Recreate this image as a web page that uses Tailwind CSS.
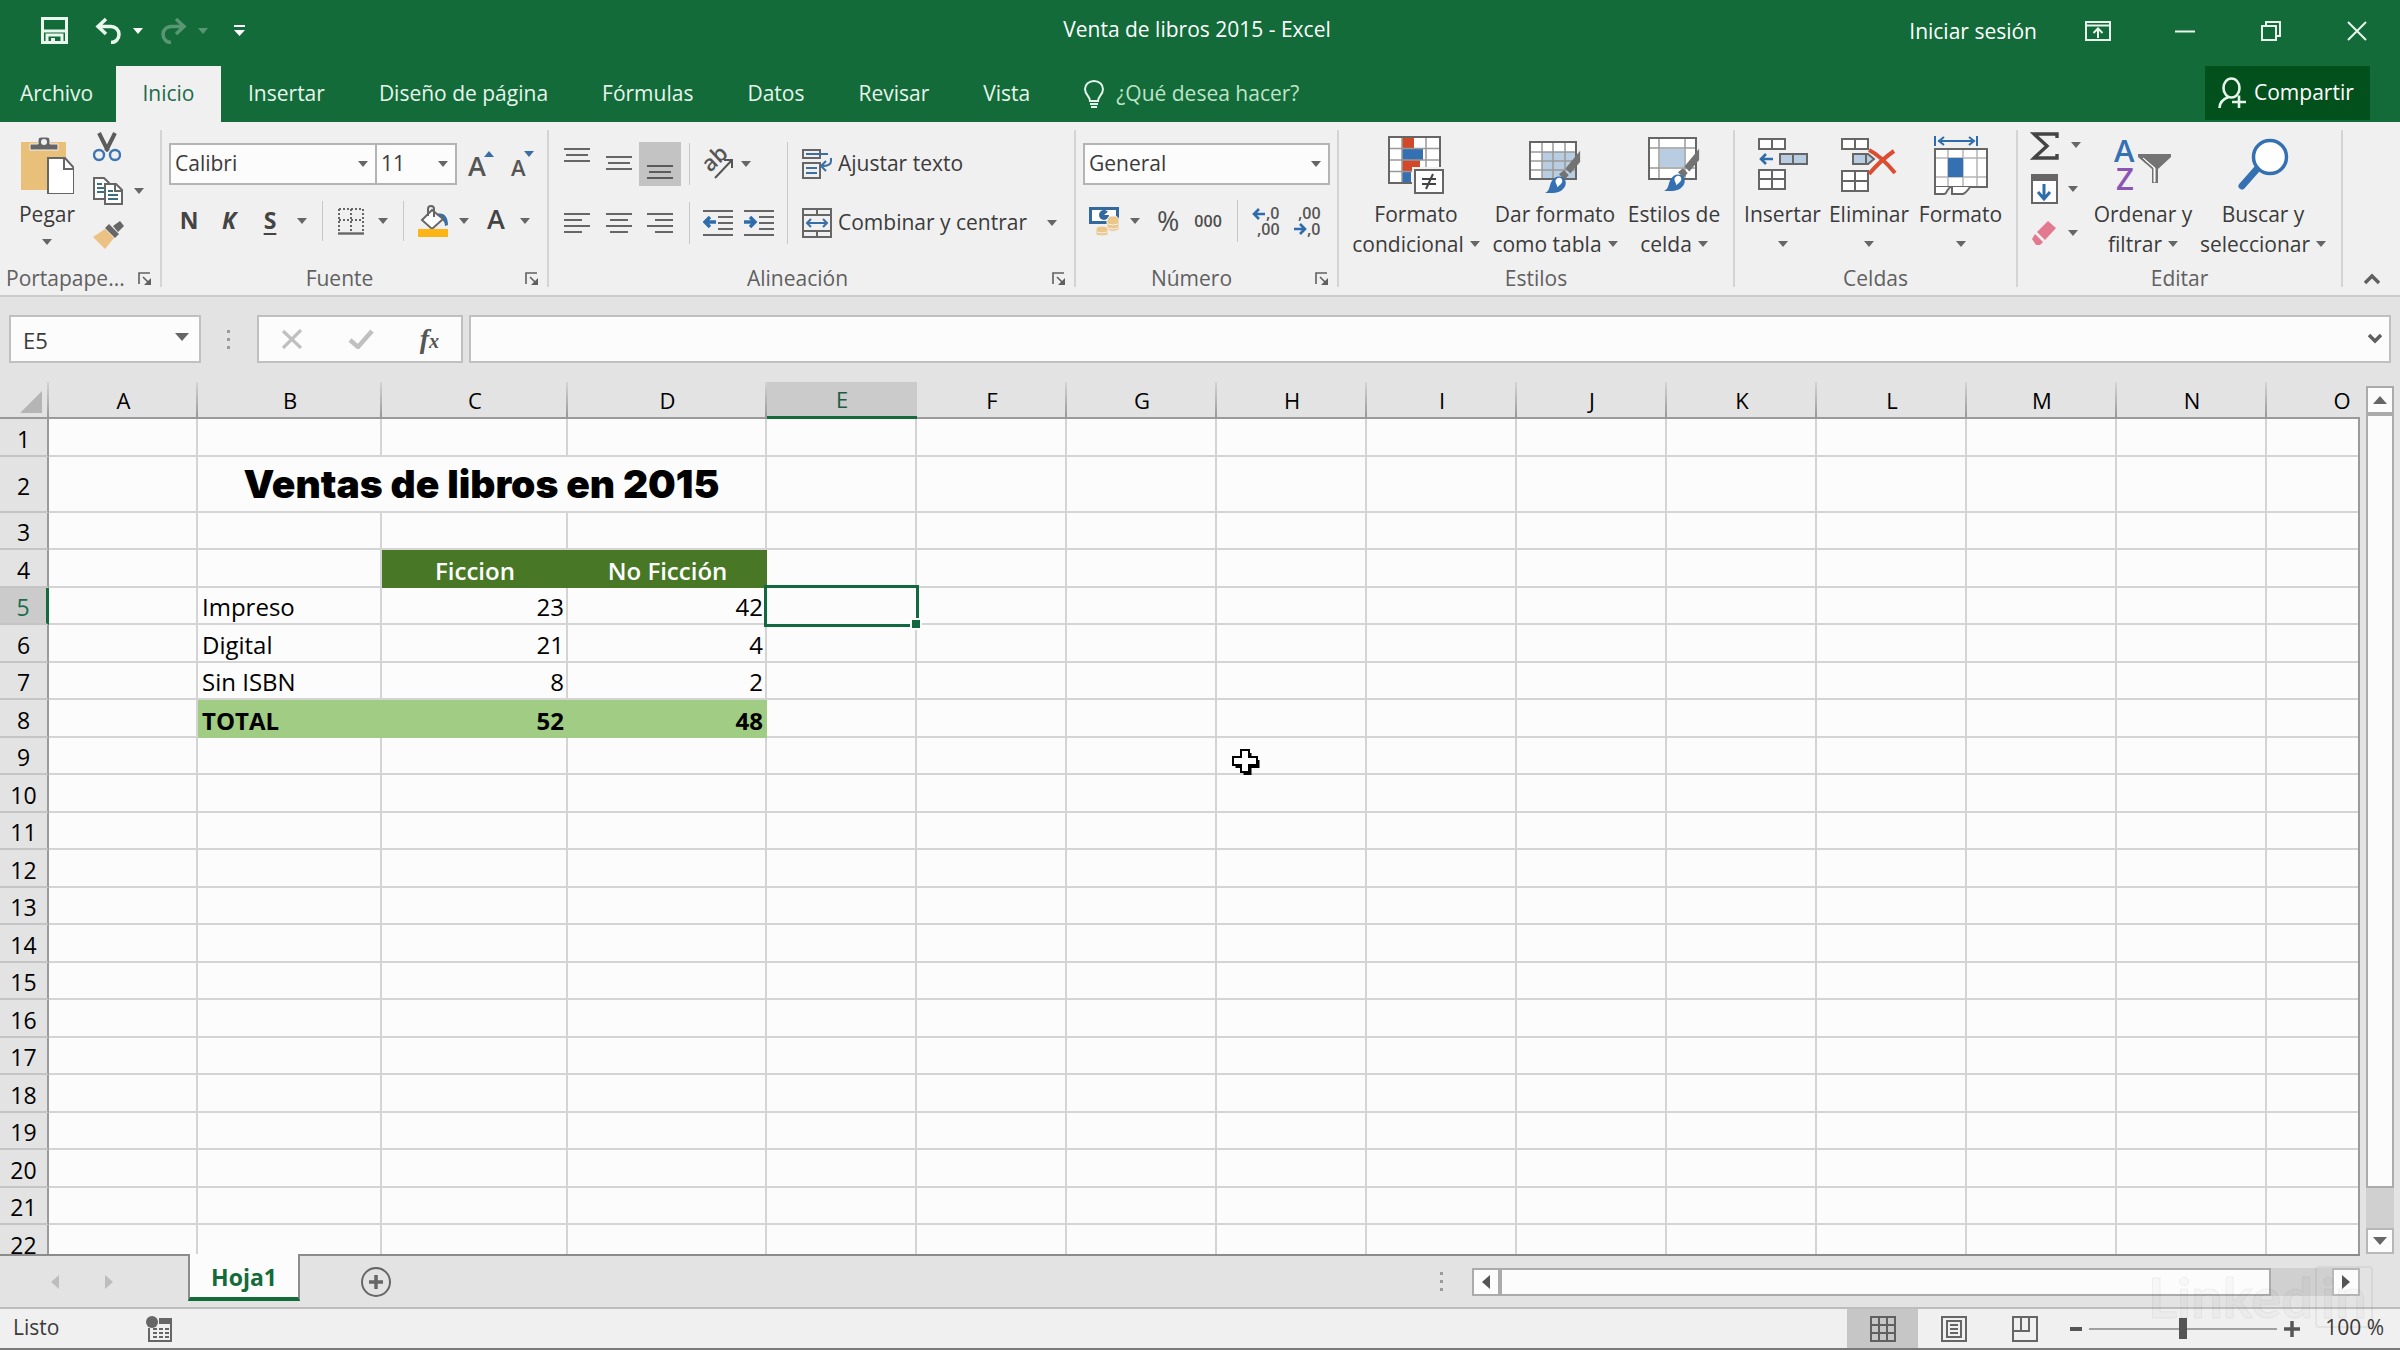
<!DOCTYPE html>
<html lang="es">
<head>
  <meta charset="UTF-8" />
  <meta name="viewport" content="width=device-width, initial-scale=1" />
  <title>Venta de libros 2015 - Excel</title>
  <script src="https://cdn.jsdelivr.net/npm/@tailwindcss/browser@4"></script>
</head>
<body class="h-screen flex flex-col overflow-hidden bg-[#e3e3e3] font-['Open_Sans',sans-serif] text-[21px] text-[#3b3b3b]">

  <!-- Shared symbols -->
  <svg class="hidden">
    <symbol id="caret" viewBox="0 0 10 6"><path d="M0 0h10L5 6z" fill="currentColor"/></symbol>
    <symbol id="launcher" viewBox="0 0 14 14"><path d="M1 12V1h11M5 5l6 6" fill="none" stroke="currentColor" stroke-width="1.6"/><path d="M13 6v7H6z" fill="currentColor"/></symbol>
    <symbol id="brush" viewBox="0 0 44 54">
      <path d="M43 2 43 16 31 30 25 24z" fill="#737373"/>
      <path d="M23 26l6 6-5 6-7-7z" fill="#737373"/>
      <path d="M0 54c6-2 5-9 8-14 3-6 9-8 14-5 5 4 4 10 0 14-5 6-14 5-22 5z" fill="#3470b2"/>
      <path d="M13 38c3-4 7-3 8 0 1 4-3 6-6 9 0-4-3-5-2-9z" fill="#fff"/>
    </symbol>
  </svg>

  <!-- Title bar -->
  <header class="bg-[#126b39] text-white">
    <div class="relative h-[66px] flex items-center pb-[5px]">
      <div class="flex items-center pl-[41px]">
        <button aria-label="Guardar"><svg class="w-[27px] h-[27px]" viewBox="0 0 27 27" fill="none" stroke="#e9f7ee"><path d="M1.5 1.5h24v24h-24z" stroke-width="3"/><path d="M2 14h23" stroke-width="3"/><path d="M6 26v-8h15v8" stroke-width="3"/><path d="M12 21v5" stroke-width="4"/></svg></button>
        <button aria-label="Deshacer" class="ml-[27px] flex items-center gap-[11px]">
          <svg class="w-[27px] h-[27px]" viewBox="0 0 27 27" fill="none" stroke="#e9f7ee" stroke-width="3.5"><path d="M11 2 3 9.500 11 17M3 9.500h13a8 8 0 0 1 0 16"/></svg>
          <svg class="w-[10px] h-[6px]"><use href="#caret"/></svg>
        </button>
        <button aria-label="Rehacer" class="ml-[17px] flex items-center gap-[11px] text-white/30">
          <svg class="w-[27px] h-[27px]" viewBox="0 0 27 27" fill="none" stroke="currentColor" stroke-width="3.500"><path d="m16 2 8 7.500L16 17M24 9.500H11a8 8 0 0 0 0 16"/></svg>
          <svg class="w-[10px] h-[6px]"><use href="#caret"/></svg>
        </button>
        <button aria-label="Personalizar barra de acceso rápido" class="ml-[26px]"><svg class="w-[11px] h-[11px]" viewBox="0 0 11 11" fill="#fff"><path d="M0 0h11v2H0zM0 5h11l-5.500 6z"/></svg></button>
      </div>
      <h1 class="absolute inset-x-0 top-[15px] pointer-events-none text-center leading-[28px] pr-1.5">Venta de libros 2015 - Excel</h1>
      <div class="ml-auto flex items-center pr-[33px]">
        <a href="#" class="leading-[28px]">Iniciar sesión</a>
        <button aria-label="Opciones de presentación" class="ml-[48px]"><svg class="w-[26px] h-[20px]" viewBox="0 0 26 20" fill="none" stroke="#e9f7ee" stroke-width="2"><path d="M1 1h24v18H1zM1 4.500h24M13 17V8M8.500 12 13 7.500l4.500 4.500"/></svg></button>
        <button aria-label="Minimizar" class="ml-[64px]"><svg class="w-[20px] h-[20px]" viewBox="0 0 20 20"><path d="M0 10.500h20" stroke="#e9f7ee" stroke-width="2"/></svg></button>
        <button aria-label="Restaurar" class="ml-[66px]"><svg class="w-[20px] h-[20px]" viewBox="0 0 20 20" fill="none" stroke="#e9f7ee" stroke-width="2"><path d="M1 5h14v14H1zM5 5V1h14v14h-4"/></svg></button>
        <button aria-label="Cerrar" class="ml-[66px]"><svg class="w-[20px] h-[20px]" viewBox="0 0 20 20"><path d="M1 1l18 18M19 1 1 19" stroke="#e9f7ee" stroke-width="2"/></svg></button>
      </div>
    </div>

    <!-- Ribbon tabs -->
    <nav class="h-14 flex items-stretch text-[#e6f5eb]">
      <a href="#" class="w-[116px] flex items-center pl-5">Archivo</a>
      <a href="#" class="w-[105px] flex items-center justify-center bg-[#f0f0f0] text-[#1d6b4a]">Inicio</a>
      <a href="#" class="flex items-center px-[27px]">Insertar</a>
      <a href="#" class="flex items-center px-[27px]">Diseño de página</a>
      <a href="#" class="flex items-center px-[27px]">Fórmulas</a>
      <a href="#" class="flex items-center px-[27px]">Datos</a>
      <a href="#" class="flex items-center px-[27px]">Revisar</a>
      <a href="#" class="flex items-center px-[27px]">Vista</a>
      <a href="#" class="flex items-center gap-3 pl-[27px] text-[#bfe3c8]">
        <svg class="w-[20px] h-[28px]" viewBox="0 0 20 28" fill="none" stroke="#e6f5eb" stroke-width="2"><path d="M6 21c0-5-5-6-5-12a9 8 0 0 1 18 0c0 6-5 7-5 12zM6 24h8M7 27h6"/></svg>
        ¿Qué desea hacer?
      </a>
      <button class="ml-auto mr-[30px] w-[165px] mb-0.5 flex items-center pl-[13px] gap-2 bg-[#02501c] text-white">
        <svg class="w-[28px] h-[32px]" viewBox="0 0 28 32" fill="none" stroke="#e6f5eb" stroke-width="2.600"><ellipse cx="13.500" cy="11" rx="8" ry="9.500"/><path d="M1.500 31c0-6 4-9 9-11M14 25h14M21 18.500V31"/></svg>
        Compartir
      </button>
    </nav>
  </header>

  <!-- Ribbon -->
  <div class="h-[175px] flex border-b-2 border-[#cccccc] bg-[#f0f0f0] text-[#3b3b3b]">

    <section class="w-[160px] flex flex-col">
      <div class="flex-1 flex pt-2">
        <button class="w-[86px] pl-2 flex flex-col items-center">
          <span class="h-[69px] flex items-center"><svg class="w-[54px] h-[58px]" viewBox="0 0 54 58"><path d="M1 6h45v48H1z" fill="#e9c07a"/><path d="M10 14V8h8V4q0-3 3-3h6q3 0 3 3v4h8v6z" fill="#666" stroke="#f0f0f0"/><circle cx="24" cy="6" r="3" fill="#f0f0f0"/><path d="M28 22h17l9 10v26H28z" fill="#fff" stroke="#666" stroke-width="2"/><path d="M44 22v11h10" fill="none" stroke="#666" stroke-width="2"/></svg></span>
          <span class="leading-[30px]">Pegar</span>
          <svg class="w-[10px] h-[6px] mt-2.5 text-[#666]"><use href="#caret"/></svg>
        </button>
        <div class="flex flex-col gap-3.5 pl-[7px] pt-[2px]">
          <button aria-label="Cortar" class="h-[30px]"><svg class="w-[28px] h-[30px]" viewBox="0 0 28 30" fill="none"><path d="M6 1l9 18M22 1l-9 18" stroke="#5c5c5c" stroke-width="4"/><circle cx="6" cy="23" r="5" stroke="#3e75b5" stroke-width="2.400"/><circle cx="22" cy="23" r="5" stroke="#3e75b5" stroke-width="2.400"/></svg></button>
          <button aria-label="Copiar" class="h-[30px] flex items-center gap-[11px]"><svg class="w-[30px] h-[28px]" viewBox="0 0 30 28" fill="#fff" stroke="#666" stroke-width="2"><path d="M1 1h10l5 5v16H1z"/><path d="M4 7h5M4 11h7M4 15h7" stroke="#3c6f80"/><path d="M12 7h11l6 6v14H12z"/><path d="M22 7v7h7" fill="none"/><path d="M15 14h5M15 18h10M15 22h10" stroke="#3c6f80"/></svg><svg class="w-[10px] h-[6px] text-[#666]"><use href="#caret"/></svg></button>
          <button aria-label="Copiar formato" class="h-[30px]"><svg class="w-[32px] h-[28px]" viewBox="0 0 32 28"><path d="M0 16 12 8l9 9-9 11z" fill="#ebc184"/><path d="M12 7l4-4 10 10-4 4zM20 5l7-5 4 5-6 6z" fill="#666"/></svg></button>
        </div>
      </div>
      <footer class="h-8 flex items-center justify-between pl-1.5 pr-2 text-[#606060]"><span>Portapape...</span><button aria-label="Opciones de portapapeles" class="flex"><svg class="w-[14px] h-[14px]"><use href="#launcher"/></svg></button></footer>
    </section>
    <div class="w-[2px] my-2 bg-[#d4d4d4]"></div>

    <section class="w-[385px] flex flex-col">
      <div class="flex-1 flex flex-col pt-[21px] pl-[7px]">
        <div class="h-[42px] flex items-center">
          <label class="relative w-[208px] h-full"><select aria-label="Fuente" class="w-full h-full appearance-none border-2 border-[#b4b4b4] bg-[#fcfcfc] pl-1"><option>Calibri</option></select><svg class="absolute right-[9px] top-[18px] w-[10px] h-[6px] text-[#666] pointer-events-none"><use href="#caret"/></svg></label>
          <label class="relative -ml-0.5 w-[82px] h-full"><select aria-label="Tamaño de fuente" class="w-full h-full appearance-none border-2 border-[#b4b4b4] bg-[#fcfcfc] pl-1"><option>11</option></select><svg class="absolute right-[9px] top-[18px] w-[10px] h-[6px] text-[#666] pointer-events-none"><use href="#caret"/></svg></label>
          <button aria-label="Aumentar tamaño de fuente" class="ml-[12px]"><svg class="w-[26px] h-[28px] overflow-visible" viewBox="0 0 26 28"><text x="-1" y="26" font-size="27" font-weight="600" fill="#555">A</text><path d="M15 7h10l-5-6z" fill="#3a6ea5"/></svg></button>
          <button aria-label="Disminuir tamaño de fuente" class="ml-[16px]"><svg class="w-[26px] h-[28px] overflow-visible" viewBox="0 0 26 28"><text x="0" y="26" font-size="22" font-weight="600" fill="#555">A</text><path d="M13 1h10l-5 6z" fill="#3a6ea5"/></svg></button>
        </div>
        <div class="h-[42px] mt-[15px] flex items-center text-[#444] font-bold text-[23px] leading-[30px]">
          <button class="w-10 pb-0.5">N</button>
          <button class="w-10 pb-0.5 italic">K</button>
          <button class="w-[42px] pb-0.5 underline underline-offset-4">S</button>
          <svg class="ml-[6px] w-[10px] h-[6px] text-[#666]"><use href="#caret"/></svg>
          <div class="ml-[15px] w-px h-10 bg-[#c8c8c8]"></div>
          <button aria-label="Bordes" class="ml-[15px]"><svg class="w-[26px] h-[28px]" viewBox="0 0 26 28" fill="none" stroke="#666"><path d="M1 2h24M1 13h24M1 2v22M13 2v22M25 2v22" stroke-width="2" stroke-dasharray="2 2"/><path d="M0 26.500h26" stroke-width="2.400"/></svg></button>
          <svg class="ml-[14px] w-[10px] h-[6px] text-[#666]"><use href="#caret"/></svg>
          <div class="ml-[15px] w-px h-10 bg-[#c8c8c8]"></div>
          <button aria-label="Color de relleno" class="ml-[14px]"><svg class="w-[30px] h-[32px]" viewBox="0 0 30 32"><path d="M19 9c7-2 11 3 11 11l-3 1c0-5-3-7-8-7z" fill="#3a6ea5"/><path d="M14 5 25 14 14 24 4 15z" fill="#fff" stroke="#666" stroke-width="2"/><path d="M10 11V4q0-3 3-3t3 3v8" fill="none" stroke="#666" stroke-width="2"/><path d="M0 24h30v8H0z" fill="#fdb515"/></svg></button>
          <svg class="ml-[11px] w-[10px] h-[6px] text-[#666]"><use href="#caret"/></svg>
          <button aria-label="Color de fuente" class="ml-[18px] pb-1 text-[27px] font-semibold">A</button>
          <svg class="ml-[15px] w-[10px] h-[6px] text-[#666]"><use href="#caret"/></svg>
        </div>
      </div>
      <footer class="h-8 flex items-center pr-2 text-[#606060]"><span class="flex-1 text-center pr-2">Fuente</span><button aria-label="Opciones de fuente" class="flex"><svg class="w-[14px] h-[14px]"><use href="#launcher"/></svg></button></footer>
    </section>
    <div class="w-[2px] my-2 bg-[#d4d4d4]"></div>

    <section class="w-[525px] flex flex-col">
      <div class="flex-1 flex pt-[20px] pl-[7px]">
        <div>
          <div class="h-[44px] flex items-center">
            <button aria-label="Alinear en la parte superior" class="w-[42px] h-11 flex justify-center pt-1"><svg class="w-[26px] h-[18px]" viewBox="0 0 26 18" stroke="#666" stroke-width="2"><path d="M0 3h26M2 9h22M0 15h26"/></svg></button>
            <button aria-label="Alinear en el medio" class="w-[41px] h-11 flex justify-center items-center"><svg class="w-[26px] h-[18px]" viewBox="0 0 26 18" stroke="#666" stroke-width="2"><path d="M0 2h26M2 8h22M0 14h26"/></svg></button>
            <button aria-label="Alinear en la parte inferior" class="w-[42px] h-11 flex justify-center items-end pb-1.5 bg-[#c3c3c3]"><svg class="w-[26px] h-[18px]" viewBox="0 0 26 18" stroke="#5c5c5c" stroke-width="2"><path d="M0 4h26M2 10h22M0 16h26"/></svg></button>
            <div class="ml-2 w-px h-[42px] bg-[#c8c8c8]"></div>
            <button aria-label="Orientación" class="ml-[12px] flex items-center gap-[7px]"><svg class="w-[32px] h-[30px] overflow-visible" viewBox="0 0 32 30"><text transform="translate(8 24) rotate(-43)" font-size="22" font-weight="600" fill="#555">ab</text><path d="M13 29 30 11M22 11h8v8" fill="none" stroke="#555" stroke-width="2"/></svg><svg class="w-[10px] h-[6px] text-[#666]"><use href="#caret"/></svg></button>
          </div>
          <div class="h-[42px] mt-4 flex items-center">
            <button aria-label="Alinear a la izquierda" class="w-[42px] flex justify-center"><svg class="w-[26px] h-[22px]" viewBox="0 0 26 22" stroke="#666" stroke-width="2"><path d="M0 2h26M0 8h18M0 14h26M0 20h18"/></svg></button>
            <button aria-label="Centrar" class="w-[41px] flex justify-center"><svg class="w-[26px] h-[22px]" viewBox="0 0 26 22" stroke="#666" stroke-width="2"><path d="M0 2h26M4 8h18M0 14h26M4 20h18"/></svg></button>
            <button aria-label="Alinear a la derecha" class="w-[42px] flex justify-center"><svg class="w-[26px] h-[22px]" viewBox="0 0 26 22" stroke="#666" stroke-width="2"><path d="M0 2h26M8 8h18M0 14h26M8 20h18"/></svg></button>
            <div class="ml-2 w-px h-[42px] bg-[#c8c8c8]"></div>
            <button aria-label="Disminuir sangría" class="ml-[13px]"><svg class="w-[30px] h-[26px]" viewBox="0 0 30 26" fill="none" stroke="#666" stroke-width="2"><path d="M0 1h30M15 7h15M15 13h15M15 19h15M0 25h30"/><path d="M13 12H3M7 7l-5 5 5 5" stroke="#2f6cab" stroke-width="3.400"/></svg></button>
            <button aria-label="Aumentar sangría" class="ml-[11px]"><svg class="w-[30px] h-[26px]" viewBox="0 0 30 26" fill="none" stroke="#666" stroke-width="2"><path d="M0 1h30M15 7h15M15 13h15M15 19h15M0 25h30"/><path d="M0 12h10M6 7l5 5-5 5" stroke="#2f6cab" stroke-width="3.400"/></svg></button>
          </div>
        </div>
        <div class="ml-[13px] w-px h-[102px] bg-[#c8c8c8]"></div>
        <div class="ml-[14px]">
          <button class="h-[44px] flex items-center gap-1.5"><svg class="w-[30px] h-[30px]" viewBox="0 0 30 30" fill="none" stroke="#666" stroke-width="2"><path d="M1 1h17v8H1zM1 14h17v15H1z"/><path d="M4 5h22M4 19h11M4 24h11M29 9v3q0 5-9 5M24 12l-5 5 5 5" stroke="#3a6ea5"/></svg>Ajustar texto</button>
          <button class="h-[42px] mt-4 flex items-center gap-1.5"><svg class="w-[30px] h-[30px]" viewBox="0 0 30 30" fill="none" stroke="#666" stroke-width="2"><path d="M1 1h28v28H1zM1 7h28M1 23h28M15 1v6M15 23v6"/><path d="M5 15h20M9 11l-4 4 4 4M21 11l4 4-4 4" stroke="#3a6ea5"/></svg>Combinar y centrar<svg class="ml-[14px] w-[10px] h-[6px] text-[#666]"><use href="#caret"/></svg></button>
        </div>
      </div>
      <footer class="h-8 flex items-center pr-2 text-[#606060]"><span class="flex-1 text-center pr-1.5">Alineación</span><button aria-label="Opciones de alineación" class="flex"><svg class="w-[14px] h-[14px]"><use href="#launcher"/></svg></button></footer>
    </section>
    <div class="w-[2px] my-2 bg-[#d4d4d4]"></div>

    <section class="w-[261px] flex flex-col">
      <div class="flex-1 flex flex-col pt-[21px] px-[7px]">
        <label class="relative h-[42px]"><select aria-label="Formato de número" class="w-full h-full appearance-none border-2 border-[#b4b4b4] bg-[#fcfcfc] pl-1"><option>General</option></select><svg class="absolute right-[9px] top-[18px] w-[10px] h-[6px] text-[#666] pointer-events-none"><use href="#caret"/></svg></label>
        <div class="h-[42px] mt-[15px] flex items-center pl-1.5">
          <button aria-label="Formato de contabilidad" class="flex items-center gap-[11px]"><svg class="w-[30px] h-[30px]" viewBox="0 0 30 30"><path d="M1.500 2.500h27v14h-27z" fill="#fff" stroke="#33699f" stroke-width="3"/><circle cx="15" cy="9" r="5" fill="#33699f"/><path d="M15 9h6V4z" fill="#fff"/><path d="M18 15q0-5 6-5t6 5v9q-6 3-12 0z" fill="#ecc689" stroke="#f0f0f0"/><path d="M7 24q0-4 6-4t6 4v5q-6 2-12 0z" fill="#ecc689" stroke="#f0f0f0"/><path d="M19 18q5 2 10 0M19 22q5 2 10 0M8 26q5 2 10 0" fill="none" stroke="#f0f0f0"/></svg><svg class="w-[10px] h-[6px] text-[#666]"><use href="#caret"/></svg></button>
          <button class="ml-[17px] text-[27px] leading-[30px] text-[#4c4c4c]">%</button>
          <button class="ml-[15px] text-base font-semibold text-[#4c4c4c]">000</button>
          <div class="ml-[15px] w-px h-[42px] bg-[#c8c8c8]"></div>
          <button aria-label="Aumentar decimales" class="ml-[14px]"><svg class="w-[28px] h-[32px] overflow-visible" viewBox="0 0 28 32"><path d="M13 9H2M7 4 2 9l5 5" fill="none" stroke="#2f6cab" stroke-width="2.600"/><text x="14" y="14" font-size="16" font-weight="600" fill="#555">,0</text><text x="5" y="30" font-size="16" font-weight="600" fill="#555">,00</text></svg></button>
          <button aria-label="Disminuir decimales" class="ml-[14px]"><svg class="w-[28px] h-[32px] overflow-visible" viewBox="0 0 28 32"><text x="4" y="14" font-size="16" font-weight="600" fill="#555">,00</text><text x="13" y="30" font-size="16" font-weight="600" fill="#555">,0</text><path d="M0 24h11M6 19l5 5-5 5" fill="none" stroke="#2f6cab" stroke-width="2.600"/></svg></button>
        </div>
      </div>
      <footer class="h-8 flex items-center pr-2 text-[#606060]"><span class="flex-1 text-center pr-2">Número</span><button aria-label="Opciones de número" class="flex"><svg class="w-[14px] h-[14px]"><use href="#launcher"/></svg></button></footer>
    </section>
    <div class="w-[2px] my-2 bg-[#d4d4d4]"></div>

    <section class="w-[394px] flex flex-col">
      <div class="flex-1 flex items-start pt-2 pl-[7px]">
        <button class="w-[140px] flex flex-col items-center">
          <span class="h-[69px] flex items-center"><svg class="w-[56px] h-[58px]" viewBox="0 0 56 58"><path d="M1 1h51v46H1z" fill="#fff"/><path d="M14 1h12v12H14zM14 24h18v11H14z" fill="#d2492a"/><path d="M14 12h21v12H14zM14 35h9v12h-9z" fill="#3470b2"/><path d="M1 12.500h51M1 24h51M1 35.500h51M14 1v46M38 1v46" fill="none" stroke="#999" stroke-width="1.500"/><path d="M1 1h51v46H1z" fill="none" stroke="#666" stroke-width="2"/><path d="M24 31h32v27H24z" fill="#f0f0f0"/><path d="M27 34h28v23H27z" fill="#fff" stroke="#666" stroke-width="2"/><path d="M34 43h14M34 48h14M45 38l-7 15" stroke="#444" stroke-width="2"/></svg></span>
          <span class="leading-[30px]">Formato</span>
          <span class="leading-[30px] flex items-center gap-1.5">condicional<svg class="w-[10px] h-[6px] text-[#666]"><use href="#caret"/></svg></span>
        </button>
        <button class="w-[138px] flex flex-col items-center">
          <span class="h-[69px] flex items-center pl-1"><svg class="w-[56px] h-[56px]" viewBox="0 0 56 56"><path d="M1 5h46v37H1z" fill="#fff"/><path d="M13 15h34v27H13z" fill="#b8cde2"/><path d="M1 15h46M1 24h46M1 33h46M13 5v37M24 5v37M36 5v37" stroke="#999" stroke-width="1.500"/><path d="M1 5h46v37H1z" fill="none" stroke="#666" stroke-width="2"/><use href="#brush" x="12" y="12" width="44" height="44"/></svg></span>
          <span class="leading-[30px]">Dar formato</span>
          <span class="leading-[30px] flex items-center gap-1.5">como tabla<svg class="w-[10px] h-[6px] text-[#666]"><use href="#caret"/></svg></span>
        </button>
        <button class="w-[100px] flex flex-col items-center">
          <span class="h-[69px] flex items-center pl-1"><svg class="w-[56px] h-[56px]" viewBox="0 0 56 56"><path d="M1 1h47v41H1z" fill="#fff"/><path d="M12 12h24v18H12z" fill="#b8cde2"/><path d="M1 11h47M1 31h47M11 1v41M37 1v41" stroke="#999" stroke-width="1.500"/><path d="M1 1h47v41H1z" fill="none" stroke="#666" stroke-width="2"/><use href="#brush" x="12" y="10" width="44" height="44"/></svg></span>
          <span class="leading-[30px]">Estilos de</span>
          <span class="leading-[30px] flex items-center gap-1.5">celda<svg class="w-[10px] h-[6px] text-[#666]"><use href="#caret"/></svg></span>
        </button>
      </div>
      <footer class="h-8 flex items-center justify-center text-[#606060]">Estilos</footer>
    </section>
    <div class="w-[2px] my-2 bg-[#d4d4d4]"></div>

    <section class="w-[281px] flex flex-col">
      <div class="flex-1 flex items-start pt-2 pl-1">
        <button class="w-[87px] flex flex-col items-center">
          <span class="h-[69px] flex items-center"><svg class="w-[50px] h-[54px]" viewBox="0 0 50 54" fill="#fff" stroke="#666" stroke-width="2"><path d="M1 1h26v10H1zM14 1v10M1 32h26v19H1zM14 32v19M1 41h26"/><path d="M22 16h27v10H22zM35 16v10" fill="#b8cde2"/><path d="M15 21H3M8 16l-5 5 5 5" fill="none" stroke="#2f6cab" stroke-width="2.600"/></svg></span>
          <span class="leading-[30px]">Insertar</span>
          <svg class="w-[10px] h-[6px] mt-3 text-[#666]"><use href="#caret"/></svg>
        </button>
        <button class="w-[86px] flex flex-col items-center">
          <span class="h-[69px] flex items-center"><svg class="w-[56px] h-[54px]" viewBox="0 0 56 54" fill="#fff" stroke="#666" stroke-width="2"><path d="M1 1h26v10H1zM14 1v10M1 33h26v20H1zM14 33v20M1 43h26"/><path d="M12 16h15l6 5-6 5H12zM25 16v10" fill="#b8cde2"/><path d="M28 12q12 6 26 23M53 13Q40 22 28 36" fill="none" stroke="#dc4c31" stroke-width="4"/></svg></span>
          <span class="leading-[30px]">Eliminar</span>
          <svg class="w-[10px] h-[6px] mt-3 text-[#666]"><use href="#caret"/></svg>
        </button>
        <button class="w-[97px] flex flex-col items-center">
          <span class="h-[69px] flex items-center"><svg class="w-[54px] h-[60px]" viewBox="0 0 54 60" fill="none" stroke="#666" stroke-width="2"><path d="M1 1v10M43 1v10M4 6h36M10 2 5 6l5 4M35 2l5 4-5 4" stroke="#2f6cab"/><path d="M1 14h52v38H1z" fill="#fff"/><path d="M1 23h52M1 42h52M14 14v38M29 14v38M43 14v38" stroke="#b5b5b5" stroke-width="1.500"/><path d="M15 24h13v17H15z" fill="#3470b2" stroke="#3470b2"/><path d="M1 14h52v38H1z"/><path d="M1 52v7h9q2 0 3-3l3-4M18 52v7h11q3-1 7-7" fill="#fff"/></svg></span>
          <span class="leading-[30px]">Formato</span>
          <svg class="w-[10px] h-[6px] mt-3 text-[#666]"><use href="#caret"/></svg>
        </button>
      </div>
      <footer class="h-8 flex items-center justify-center text-[#606060]">Celdas</footer>
    </section>
    <div class="w-[2px] my-2 bg-[#d4d4d4]"></div>

    <section class="w-[323px] flex flex-col">
      <div class="flex-1 flex items-start pt-2 pl-3">
        <div class="w-[60px] flex flex-col gap-3.5">
          <button aria-label="Autosuma" class="h-[30px] flex items-center gap-[11px]"><svg class="w-[30px] h-[30px]" viewBox="0 0 30 30" fill="none" stroke="#444" stroke-width="3.400"><path d="M27 8V4H4l13 12L4 28h23v-4"/></svg><svg class="w-[10px] h-[6px] text-[#666]"><use href="#caret"/></svg></button>
          <button aria-label="Rellenar" class="h-[30px] flex items-center gap-[10px]"><svg class="w-[28px] h-[30px]" viewBox="0 0 28 30"><path d="M2 1h25v28H2z" fill="#fff" stroke="#666" stroke-width="2"/><path d="M1 0h27v7H1z" fill="#666"/><path d="M14 10v15M8 18l6 7 6-7" fill="none" stroke="#2f6cab" stroke-width="3"/></svg><svg class="w-[10px] h-[6px] text-[#666]"><use href="#caret"/></svg></button>
          <button aria-label="Borrar" class="h-[30px] flex items-center gap-[10px]"><svg class="w-[28px] h-[26px]" viewBox="0 0 28 26"><path d="M18 1 26 8 15 20 7 12z" fill="#e2798f"/><path d="M5 14l8 8-3 3H6l-4-6z" fill="#e2798f"/></svg><svg class="w-[10px] h-[6px] text-[#666]"><use href="#caret"/></svg></button>
        </div>
        <button class="w-[106px] flex flex-col items-center">
          <span class="h-[69px] flex items-center"><svg class="w-[58px] h-[54px] overflow-visible" viewBox="0 0 58 54"><text x="0" y="24" font-size="31" font-weight="600" fill="#3470b2">A</text><text x="2" y="52" font-size="31" font-weight="600" fill="#8b55b5">Z</text><path d="M24 16h33v3L44 31v14h-6V31L24 19z" fill="#737373"/><path d="M29 20l11 10v14h1V30z" fill="#fff" stroke="#fff"/></svg></span>
          <span class="leading-[30px]">Ordenar y</span>
          <span class="leading-[30px] flex items-center gap-1.5">filtrar<svg class="w-[10px] h-[6px] text-[#666]"><use href="#caret"/></svg></span>
        </button>
        <button class="w-[134px] flex flex-col items-center">
          <span class="h-[69px] flex items-center"><svg class="w-[52px] h-[54px]" viewBox="0 0 52 54"><path d="M5 48 20 31" stroke="#3470b2" stroke-width="7" stroke-linecap="round"/><circle cx="33" cy="19" r="16.500" fill="#fff" stroke="#3470b2" stroke-width="3.500"/></svg></span>
          <span class="leading-[30px]">Buscar y</span>
          <span class="leading-[30px] flex items-center gap-1.5">seleccionar<svg class="w-[10px] h-[6px] text-[#666]"><use href="#caret"/></svg></span>
        </button>
      </div>
      <footer class="h-8 flex items-center justify-center text-[#606060]">Editar</footer>
    </section>
    <div class="w-[2px] my-2 bg-[#d4d4d4]"></div>
    <button aria-label="Contraer la cinta" class="ml-auto mr-5 self-end mb-[10px]"><svg class="w-[16px] h-[12px]" viewBox="0 0 16 12"><path d="M1 10l7-7 7 7" fill="none" stroke="#606060" stroke-width="3.500"/></svg></button>
  </div>

  <!-- Formula bar -->
  <div class="h-[85px] flex items-start pt-[18px] pl-[9px] pr-[9px]">
    <div class="relative">
      <input aria-label="Cuadro de nombres" value="E5" class="w-[192px] h-12 border-2 border-[#c0c0c0] bg-[#fcfcfc] pl-3 pt-0.5 text-[22px]" />
      <svg class="absolute right-[12px] top-[18px] w-[14px] h-[8px] text-[#666]" viewBox="0 0 14 8"><path d="M0 0h14L7 8z" fill="currentColor"/></svg>
    </div>
    <div class="ml-[26px] mt-[15px] flex flex-col gap-[5px]"><i class="size-[3px] bg-[#9a9a9a]"></i><i class="size-[3px] bg-[#9a9a9a]"></i><i class="size-[3px] bg-[#9a9a9a]"></i></div>
    <div class="ml-[27px] w-[206px] h-12 flex items-center justify-between pl-[22px] pr-[22px] border-2 border-[#c0c0c0] bg-[#fcfcfc]">
      <button aria-label="Cancelar"><svg class="w-[22px] h-[20px]" viewBox="0 0 22 20"><path d="M2 2l18 17M20 1 2 19" stroke="#c0c0c0" stroke-width="3.200"/></svg></button>
      <button aria-label="Introducir"><svg class="w-[26px] h-[20px]" viewBox="0 0 26 20"><path d="M2 11l8 7L24 2" fill="none" stroke="#c0c0c0" stroke-width="4.500"/></svg></button>
      <button aria-label="Insertar función" class="font-['Liberation_Serif',serif] italic font-bold text-[28px] leading-[30px] text-[#555]">f<span class="text-xl">x</span></button>
    </div>
    <div class="relative ml-[6px] flex-1">
      <input aria-label="Barra de fórmulas" class="w-full h-12 border-2 border-[#c0c0c0] bg-[#fcfcfc] px-3" />
      <svg class="absolute right-[9px] top-[18px] w-[14px] h-[11px]" viewBox="0 0 14 11"><path d="M1 2l6 6 6-6" fill="none" stroke="#606060" stroke-width="3.500"/></svg>
    </div>
  </div>

  <!-- Worksheet -->
  <main class="flex-1 min-h-0 flex">
    <div class="relative flex-1 min-w-0 overflow-hidden">
      <table class="table-fixed w-[2417px] border-separate border-spacing-0 text-black">
        <colgroup id="cols"></colgroup>
        <thead><tr id="head"></tr></thead>
        <tbody id="body"></tbody>
      </table>
      <div class="absolute right-0 top-9 bottom-0 w-0.5 bg-[#9a9a9a]"></div>
      <!-- Mouse pointer -->
      <svg class="absolute left-[1230px] top-[365px] w-[32px] h-[30px]" viewBox="0 0 32 30"><path d="M12 4h8v7h8v8h-8v7h-8v-7H4v-8h8z" transform="translate(1.500 2)" fill="#000"/><path d="M11 3h8v7h8v8h-8v7h-8v-7H3v-8h8z" fill="#fff" stroke="#000" stroke-width="2"/></svg>
    </div>
    <div class="w-10 flex flex-col px-1.5 pt-1">
      <button aria-label="Subir" class="w-[28px] h-[28px] flex items-center justify-center border-2 border-[#ababab] bg-[#fcfcfc]"><svg class="w-[14px] h-[8px]" viewBox="0 0 14 8"><path d="M0 8h14L7 0z" fill="#666"/></svg></button>
      <div class="flex-1 w-[28px] pb-10 bg-[#d0d0d0]"><div class="h-full border-2 border-[#ababab] bg-[#fcfcfc]"></div></div>
      <button aria-label="Bajar" class="w-[28px] h-[26px] flex items-center justify-center border-2 border-[#b8b8b8] bg-[#fcfcfc]"><svg class="w-[14px] h-[8px]" viewBox="0 0 14 8"><path d="M0 0h14L7 8z" fill="#666"/></svg></button>
    </div>
  </main>

  <!-- Sheet tabs -->
  <div class="h-[53px] flex items-start pr-10">
    <div class="w-[188px] h-full flex items-center gap-[46px] pl-[51px] border-t-2 border-[#8c8c8c]">
      <button aria-label="Hoja anterior" class="flex"><svg class="w-[8px] h-[14px]" viewBox="0 0 8 14"><path d="M8 0v14L0 7z" fill="#bdbdbd"/></svg></button>
      <button aria-label="Hoja siguiente" class="flex"><svg class="w-[8px] h-[14px]" viewBox="0 0 8 14"><path d="M0 0v14l8-7z" fill="#bdbdbd"/></svg></button>
    </div>
    <a href="#" class="w-[112px] h-[47px] pt-1 flex items-center justify-center bg-[#fcfcfc] border-x-2 border-x-[#8c8c8c] border-b-4 border-b-[#126b39] font-bold text-[23px] text-[#126b39]">Hoja1</a>
    <div class="flex-1 h-full flex items-center border-t-2 border-[#8c8c8c]">
      <button aria-label="Hoja nueva" class="ml-[61px]"><svg class="w-[30px] h-[30px]" viewBox="0 0 30 30" fill="none" stroke="#666"><circle cx="15" cy="15" r="14" stroke-width="2"/><path d="M8 15h14M15 8v14" stroke-width="3.500"/></svg></button>
      <div class="ml-auto flex flex-col gap-[5px]"><i class="size-[3px] bg-[#9a9a9a]"></i><i class="size-[3px] bg-[#9a9a9a]"></i><i class="size-[3px] bg-[#9a9a9a]"></i></div>
      <div class="ml-[29px] w-[888px] h-[28px] flex bg-[#d0d0d0]">
        <button aria-label="Desplazar a la izquierda" class="w-[28px] flex items-center justify-center border-2 border-[#ababab] bg-[#fcfcfc]"><svg class="w-[8px] h-[14px]" viewBox="0 0 8 14"><path d="M8 0v14L0 7z" fill="#555"/></svg></button>
        <div class="flex-1 mr-[61px] border-2 border-[#ababab] bg-[#fcfcfc]"></div>
        <button aria-label="Desplazar a la derecha" class="w-[28px] flex items-center justify-center border-2 border-[#b8b8b8] bg-[#fcfcfc]"><svg class="w-[8px] h-[14px]" viewBox="0 0 8 14"><path d="M0 0v14l8-7z" fill="#555"/></svg></button>
      </div>
    </div>
  </div>

  <!-- Status bar -->
  <footer class="relative h-[43px] flex items-center border-t-2 border-t-[#bdbdbd] border-b-2 border-b-[#7a7a7a] bg-[#f0f0f0] pl-[13px] pr-4">
    <span class="pb-0.5">Listo</span>
    <button aria-label="Grabar macro" class="ml-[87px]"><svg class="w-[26px] h-[26px]" viewBox="0 0 26 26"><path d="M13 2h13v6H13z" fill="#666"/><path d="M3 12v13h22V4" fill="none" stroke="#666" stroke-width="2"/><path d="M7 13h4M13 13h4M19 13h4M7 17h4M13 17h4M19 17h4M7 21h4M13 21h4M19 21h4" stroke="#666" stroke-width="2"/><circle cx="6" cy="6" r="6" fill="#666"/></svg></button>
    <div class="ml-auto h-full flex items-center">
      <button aria-label="Normal" class="w-[71px] h-full flex items-center justify-center bg-[#c6c6c6]"><svg class="w-[26px] h-[26px]" viewBox="0 0 26 26" fill="none" stroke="#606060" stroke-width="2"><path d="M1 1h24v24H1zM1 9h24M1 17h24M9 1v24M17 1v24"/></svg></button>
      <button aria-label="Diseño de página" class="w-[71px] h-full flex items-center justify-center"><svg class="w-[26px] h-[26px]" viewBox="0 0 26 26" fill="none" stroke="#666" stroke-width="2"><path d="M1 1h24v24H1zM6 5h14v16H6zM9 9h8M9 13h8M9 17h8"/></svg></button>
      <button aria-label="Vista previa de salto de página" class="w-[71px] h-full flex items-center justify-center"><svg class="w-[26px] h-[26px]" viewBox="0 0 26 26" fill="none" stroke="#666" stroke-width="2"><path d="M1 1h24v24H1zM9 1v14M1 15h16V1"/></svg></button>
      <button aria-label="Alejar" class="ml-[10px]"><svg class="w-[12px] h-[16px]" viewBox="0 0 12 16"><path d="M0 8h12" stroke="#555" stroke-width="4"/></svg></button>
      <input type="range" aria-label="Zoom" min="0" max="200" value="100" class="ml-[7px] w-[188px] h-[22px] appearance-none bg-[linear-gradient(#a0a0a0,#a0a0a0)] bg-[length:100%_2px] bg-center bg-no-repeat [&::-webkit-slider-thumb]:appearance-none [&::-webkit-slider-thumb]:w-[8px] [&::-webkit-slider-thumb]:h-[21px] [&::-webkit-slider-thumb]:bg-[#555]" />
      <button aria-label="Acercar" class="ml-[7px]"><svg class="w-[16px] h-[16px]" viewBox="0 0 16 16"><path d="M0 8h16M8 0v16" stroke="#555" stroke-width="3.500"/></svg></button>
      <span class="ml-[25px] pb-0.5">100 %</span>
    </div>
    <!-- Faint course watermark -->
    <div class="absolute right-[27px] -top-[43px] flex items-center gap-0.5 pointer-events-none font-['Lato',sans-serif] font-bold text-[56px] leading-[58px] text-black/2 [-webkit-text-stroke:1px_#0000000d]">Linked<span class="w-[58px] text-center rounded border-2 border-black/5">in</span></div>
  </footer>

  <script>
    const widths = [49, 149, 184, 186, 199, 150, 150, 150, 150, 150, 150, 150, 150, 150, 150, 150];
    const letters = 'ABCDEFGHIJKLMNO'.split('');
    const cells = {
      C4: 'Ficcion', D4: 'No Ficción',
      B5: 'Impreso', C5: '23', D5: '42',
      B6: 'Digital', C6: '21', D6: '4',
      B7: 'Sin ISBN', C7: '8', D7: '2',
      B8: 'TOTAL', C8: '52', D8: '48',
    };

    document.getElementById('cols').innerHTML = widths.map(w => `<col style="width:${w}px">`).join('');

    // Column letters
    const headBase = 'h-[37px] p-0 font-normal text-[22px] leading-[34px] border-b-2 bg-no-repeat bg-right bg-[length:2px_100%] bg-[linear-gradient(#d4d4d4,#999999)]';
    document.getElementById('head').innerHTML =
      `<th aria-label="Seleccionar todo" class="${headBase} border-[#9a9a9a]"><svg class="ml-5 mt-1 w-[22px] h-[22px]" viewBox="0 0 22 22"><path d="M22 0v22H0z" fill="#b5b5b5"/></svg></th>` +
      letters.map(l => l === 'E'
        ? `<th class="h-[37px] p-0 font-normal text-[22px] leading-[34px] border-b-3 border-[#126b39] bg-[#cbcbcb] text-[#1d5c40]">E</th>`
        : `<th class="${headBase} border-[#9a9a9a]">${l}</th>`).join('');

    function cellClass(id) {
      const col = id[0], row = +id.slice(1);
      if (row === 4 && (col === 'C' || col === 'D')) return 'px-0 bg-[#487825] text-white font-semibold text-center';
      if (row === 8 && 'BCD'.includes(col)) return 'px-1 bg-[#a1cc83] font-bold ' + (col === 'B' ? 'text-left' : 'text-right');
      const line = 'border-r-2 border-b-2 border-[#d4d4d4] bg-[#fcfcfc] ';
      if (id === 'E5') return line + 'relative px-0';
      return line + (col === 'B' ? 'pl-1 pr-0 text-left' : 'pr-0.5 pl-0 text-right');
    }

    let html = '';
    for (let r = 1; r <= 22; r++) {
      const height = r === 2 ? 'h-[56px]' : r % 2 && r > 1 ? 'h-[37px]' : 'h-[38px]';
      const active = r === 5 ? 'bg-[#cbcbcb] text-[#1d6b4a] border-r-3 border-r-[#126b39]' : 'border-r-2 border-r-[#9a9a9a]';
      html += `<tr class="${height}"><th class="p-0 pt-[3px] font-normal text-[23px] leading-[32px] border-b-2 border-b-[#c4c4c4] ${active}">${r}</th>`;
      for (const l of letters) {
        const id = l + r;
        if (r === 2 && (l === 'C' || l === 'D')) continue;
        if (id === 'B2') {
          html += `<td colspan="3" class="p-0 text-center font-['Inter',sans-serif] font-black text-[39px] leading-[50px] border-r-2 border-b-2 border-[#d4d4d4] bg-[#fcfcfc]">Ventas de libros en 2015</td>`;
          continue;
        }
        const mark = id === 'E5' ? '<div class="absolute -left-[3px] -right-1 -top-[3px] -bottom-1 border-3 border-[#12693f] bg-[#fcfcfc]"><i class="absolute -right-1.5 -bottom-1.5 size-3 border-2 border-[#fcfcfc] bg-[#12693f]"></i></div>' : '';
        html += `<td class="text-[24px] leading-[32px] pt-[3px] pb-0 ${cellClass(id)}">${cells[id] || ''}${mark}</td>`;
      }
      html += '</tr>';
    }
    document.getElementById('body').innerHTML = html;
  </script>
</body>
</html>
